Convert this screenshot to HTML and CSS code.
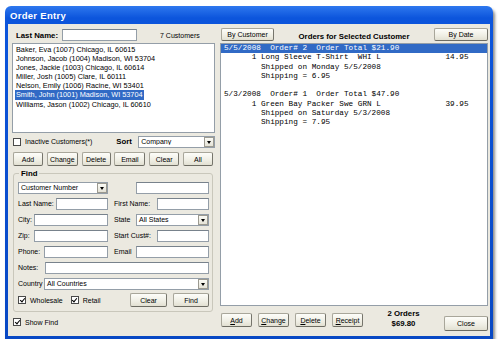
FILE: index.html
```html
<!DOCTYPE html>
<html lang="en">
	<head>
		<meta charset="UTF-8" />
		<meta name="viewport" content="width=device-width, initial-scale=1.0" />
		<title>Order Entry</title>
		<link rel="stylesheet" href="styles.css">
	</head>
	<body>
		<div class="window">
			<div class="titlebar">Order Entry</div>
			<div class="client">
				<div class="left">
					<div class="search-row">
						<label class="bold">Last Name:</label>
						<input type="text" class="box search-input" />
						<span class="count">7 Customers</span>
					</div>

					<div class="listbox">
						<div class="item">Baker, Eva (1007) Chicago, IL 60615</div>
						<div class="item">Johnson, Jacob (1004) Madison, WI 53704</div>
						<div class="item">Jones, Jackie (1003) Chicago, IL 60614</div>
						<div class="item">Miller, Josh (1005) Clare, IL 60111</div>
						<div class="item">Nelson, Emily (1006) Racine, WI 53401</div>
						<div class="item"><span class="sel">Smith, John (1001) Madison, WI 53704</span></div>
						<div class="item">Williams, Jason (1002) Chicago, IL 60610</div>
					</div>

					<div class="options-row">
						<span class="chk"></span>
						<span class="chk-label">Inactive Customers(*)</span>
						<span class="bold sort-label">Sort</span>
						<span class="select w77"><span class="val">Company</span><span class="arrow"></span></span>
					</div>

					<div class="btn-row">
						<button class="btn w30">Add</button>
						<button class="btn w31">Change</button>
						<button class="btn w29">Delete</button>
						<button class="btn w31">Email</button>
						<button class="btn w30">Clear</button>
						<button class="btn w30">All</button>
					</div>

					<fieldset class="find">
						<legend class="bold">Find</legend>
						<div class="frow">
							<div class="cell-l">
								<span class="select w90"><span class="val">Customer Number</span><span class="arrow"></span></span>
							</div>
							<div class="cell-r">
								<input type="text" class="box w73" />
							</div>
						</div>
						<div class="frow">
							<div class="cell-l">
								<label>Last Name:</label>
								<input type="text" class="box w52" />
							</div>
							<div class="cell-r">
								<label>First Name:</label>
								<input type="text" class="box w52" />
							</div>
						</div>
						<div class="frow">
							<div class="cell-l">
								<label>City:</label>
								<input type="text" class="box w74" />
							</div>
							<div class="cell-r">
								<label>State</label>
								<span class="select w73"><span class="val">All States</span><span class="arrow"></span></span>
							</div>
						</div>
						<div class="frow">
							<div class="cell-l">
								<label>Zip:</label>
								<input type="text" class="box w74" />
							</div>
							<div class="cell-r">
								<label>Start Cust#:</label>
								<input type="text" class="box w52" />
							</div>
						</div>
						<div class="frow">
							<div class="cell-l">
								<label>Phone:</label>
								<input type="text" class="box w64" />
							</div>
							<div class="cell-r">
								<label>Email</label>
								<input type="text" class="box w73" />
							</div>
						</div>
						<div class="frow wide">
							<label>Notes:</label>
							<input type="text" class="box w164" />
						</div>
						<div class="frow wide">
							<label>Country</label>
							<span class="select w165"><span class="val">All Countries</span><span class="arrow"></span></span>
						</div>
						<div class="frow last">
							<span class="chk on"></span>
							<span class="chk-label">Wholesale</span>
							<span class="chk on retail"></span>
							<span class="chk-label">Retail</span>
							<button class="btn w37 clear-btn">Clear</button>
							<button class="btn w36 find-btn">Find</button>
						</div>
					</fieldset>

					<div class="show-row">
						<span class="chk on"></span>
						<span class="chk-label">Show Find</span>
					</div>
				</div>

				<div class="right">
					<div class="orders-head">
						<button class="btn w53">By Customer</button>
						<span class="bold orders-title">Orders for Selected Customer</span>
						<button class="btn w54">By Date</button>
					</div>

					<div class="orders">
						<div class="line picked">5/5/2008  Order# 2  Order Total $21.90</div>
						<div class="line">      1 Long Sleeve T-Shirt  WHI L              14.95</div>
						<div class="line">        Shipped on Monday 5/5/2008</div>
						<div class="line">        Shipping = 6.95</div>
						<div class="line"> </div>
						<div class="line">5/3/2008  Order# 1  Order Total $47.90</div>
						<div class="line">      1 Green Bay Packer Swe GRN L              39.95</div>
						<div class="line">        Shipped on Saturday 5/3/2008</div>
						<div class="line">        Shipping = 7.95</div>
					</div>

					<div class="orders-foot">
						<button class="btn w31"><u>A</u>dd</button>
						<button class="btn w31"><u>C</u>hange</button>
						<button class="btn w31"><u>D</u>elete</button>
						<button class="btn w31"><u>R</u>eceipt</button>
						<div class="summary bold">
							<div>2 Orders</div>
							<div>$69.80</div>
						</div>
						<button class="btn w44 close-btn">Close</button>
					</div>
				</div>
			</div>
		</div>
	</body>
</html>
```

FILE: styles.css
```css
* {
	box-sizing: border-box;
}

body {
	margin: 0;
	background-color: #ffffff;
	font-family: 'Liberation Sans', Arial, sans-serif;
	font-size: 7px;
	color: #000000;
}

.bold {
	font-weight: bold;
	font-size: 7.8px;
}

.window {
	margin: 6px 0 0 5px;
	width: 488px;
	height: 333px;
	display: flex;
	flex-direction: column;
	padding: 0 3px 3px;
	border-radius: 6px 6px 0 0;
	background: linear-gradient(#2e78ee, #0c55dc 12px, #0848c4);
	box-shadow: 2px 3px 3px rgba(0, 0, 0, 0.45);
}

.titlebar {
	height: 18px;
	line-height: 19px;
	padding-left: 2px;
	color: white;
	font-weight: bold;
	font-size: 9.5px;
	letter-spacing: 0.3px;
}

.client {
	flex: 1;
	display: flex;
	gap: 5px;
	padding: 4px 2px 0 4px;
	background-color: #ebe9e0;
}

.left {
	width: 203px;
	display: flex;
	flex-direction: column;
}

.right {
	width: 268px;
	display: flex;
	flex-direction: column;
}

/* inputs, selects, buttons */

.box {
	height: 12px;
	margin: 0;
	padding: 0;
	border: 1px solid #949ea8;
	border-top-color: #78828c;
	background-color: white;
	font: inherit;
}

.select {
	height: 12px;
	display: flex;
	align-items: center;
	border: 1px solid #949ea8;
	background-color: white;
}

.select .val {
	flex: 1;
	padding-left: 2px;
	white-space: nowrap;
	overflow: hidden;
}

.select .arrow {
	width: 10px;
	height: 10px;
	border: 1px solid #9c9a90;
	background: linear-gradient(#fbfbf6, #e4e2d6);
	position: relative;
}

.select .arrow::after {
	content: '';
	position: absolute;
	left: 2px;
	top: 3px;
	border-left: 2.5px solid transparent;
	border-right: 2.5px solid transparent;
	border-top: 3px solid #000;
}

.btn {
	height: 14px;
	margin: 0;
	padding: 0;
	border: 1px solid #a8a69a;
	border-right-color: #76756c;
	border-bottom-color: #6c6b62;
	border-radius: 2px;
	background: linear-gradient(#fdfdf9, #efeee4 60%, #e2e0d2);
	font: inherit;
	color: #000;
}

.chk {
	width: 8px;
	height: 8px;
	flex: none;
	border: 1px solid #4a4a4a;
	background-color: white;
	position: relative;
}

.chk.on::after {
	content: '';
	position: absolute;
	left: 1.5px;
	top: 0px;
	width: 2px;
	height: 4px;
	border-right: 1.5px solid #000;
	border-bottom: 1.5px solid #000;
	transform: rotate(40deg);
}

.chk-label {
	margin-left: 4px;
	white-space: nowrap;
}

.w29 { width: 29px; }
.w30 { width: 30px; }
.w31 { width: 31px; }
.w36 { width: 36px; }
.w37 { width: 37px; }
.w44 { width: 44px; }
.w52 { width: 52px; }
.w53 { width: 53px; }
.w54 { width: 54px; }
.w64 { width: 64px; }
.w73 { width: 73px; }
.w74 { width: 74px; }
.w77 { width: 77px; }
.w90 { width: 90px; }
.w164 { width: 164px; }
.w165 { width: 165px; }

/* left side */

.search-row {
	height: 14px;
	display: flex;
	align-items: center;
	padding-left: 4px;
}

.search-input {
	width: 75px;
	margin-left: 4px;
}

.count {
	margin-left: 23px;
}

.listbox {
	margin-top: 1px;
	height: 90px;
	padding: 0.5px 0;
	border: 1px solid #949ea8;
	background-color: white;
	font-size: 7.3px;
}

.item {
	height: 9.2px;
	line-height: 9.2px;
	padding-left: 3px;
	white-space: nowrap;
}

.sel {
	background-color: #316ac5;
	color: white;
	padding: 0 1px;
	margin-left: -1px;
	display: inline-block;
}

.options-row {
	margin-top: 1px;
	height: 15px;
	display: flex;
	align-items: center;
	padding-left: 1px;
}

.sort-label {
	margin-left: 24px;
	width: 22px;
}

.btn-row {
	margin-top: 3px;
	margin-left: 1px;
	width: 200px;
	display: flex;
	justify-content: space-between;
}

.find {
	margin: 3px 0 0 1px;
	width: 200px;
	padding: 3px 3px 4px 4px;
	border: 1px solid #c9c7bb;
	border-radius: 3px;
}

.find legend {
	padding: 0 2px;
	margin-left: 1px;
	line-height: 9px;
}

.frow {
	height: 13px;
	margin-bottom: 3px;
	display: flex;
	align-items: center;
}

.cell-l {
	width: 90px;
	display: flex;
	align-items: center;
	justify-content: space-between;
}

.cell-r {
	width: 95px;
	margin-left: auto;
	display: flex;
	align-items: center;
	justify-content: space-between;
}

.cell-l .select:only-child {
	width: 91px;
}

.cell-r .box:only-child {
	margin-left: auto;
}

.frow.wide {
	justify-content: space-between;
}

.frow.last {
	height: 14px;
	margin: 1px 0 0;
}

.retail {
	margin-left: 8px;
}

.clear-btn {
	margin-left: auto;
}

.find-btn {
	margin-left: 6px;
}

.show-row {
	margin-top: 5px;
	height: 10px;
	display: flex;
	align-items: center;
	padding-left: 1px;
}

/* right side */

.orders-head {
	height: 13px;
	display: flex;
	align-items: center;
	justify-content: space-between;
	padding-left: 1px;
}

.orders-head .btn {
	height: 13px;
}

.orders-title {
	margin-top: 4px;
}

.orders {
	margin-top: 2px;
	height: 263px;
	border: 1px solid #949ea8;
	background-color: white;
	font-family: 'Liberation Mono', 'Courier New', monospace;
	font-size: 7.7px;
}

.line {
	height: 9.3px;
	line-height: 9.3px;
	padding-left: 3px;
	white-space: pre;
}

.line.picked {
	background-color: #316ac5;
	color: white;
}

.orders-foot {
	flex: 1;
	display: flex;
	align-items: flex-start;
	gap: 6px;
	padding: 7px 0 0 1px;
}

.summary {
	flex: 1;
	margin-top: -4px;
	text-align: center;
	line-height: 10px;
}

.close-btn {
	margin-top: 3px;
	height: 15px;
}
```
